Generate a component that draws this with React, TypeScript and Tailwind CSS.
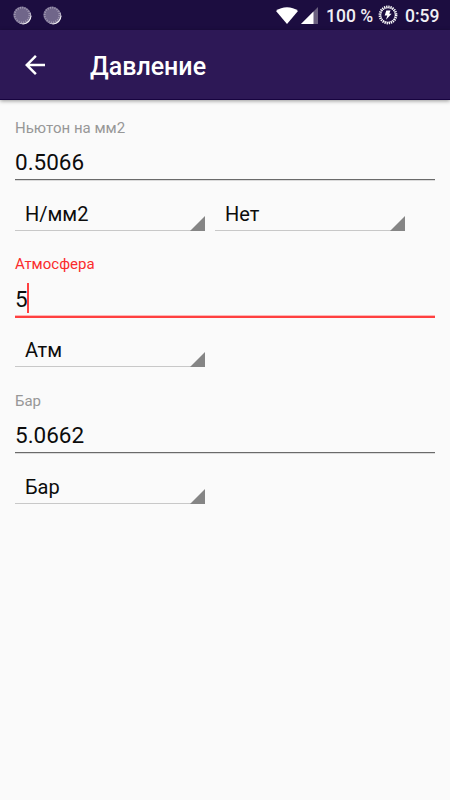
interface SpinnerProps {
    value: string;
}

interface FieldProps {
    label: string;
    value: string;
    units: string[];
    focused?: boolean;
}

const SyncDot = () => (
    <svg className="w-5 h-5" viewBox="0 0 20 20">
        <circle cx="11.2" cy="11.2" r="8.2" fill="#f4f2f6" />
        <circle cx="10" cy="10" r="8.6" fill="#70668a" />
        <circle cx="10" cy="10" r="7.4" fill="none" stroke="#a098b1" strokeWidth="1.8" strokeDasharray="1.1 1.22" />
    </svg>
);

const StatusBar = () => (
    <div className="flex items-center justify-between h-[30px] bg-[#1c0d40] pl-3 pr-[10px]">
        <div className="flex gap-[10px] pb-px">
            <SyncDot />
            <SyncDot />
        </div>
        <div className="flex items-center text-[17.5px] font-medium leading-none text-[#f1eff4]">
            <svg className="w-[22px] h-[17px]" viewBox="0 0 22 17">
                <path d="M0 4C6-.9 16-.9 22 4L11 17z" fill="#fff" />
            </svg>
            <svg className="w-[17px] h-[17px] ml-[3px]" viewBox="0 0 17 17">
                <path d="M17 0v17H0z" fill="#6b617f" />
                <path d="M12.5 4.5V17H0z" fill="#fff" />
            </svg>
            <span className="ml-[8px] mt-[3px] w-[48px] whitespace-nowrap">100 %</span>
            <svg className="w-5 h-5 ml-[4px]" viewBox="0 0 20 20">
                <circle cx="10" cy="10" r="8.2" fill="none" stroke="#fff" strokeWidth="2.4" strokeDasharray="1.3 .85" />
                <circle cx="10" cy="10" r="7.2" fill="none" stroke="#fff" strokeWidth=".7" />
                <path d="M8.3 5.5h4.2L11.3 8.8h2.3L8 14.8l1.3-4.2H6.7z" fill="#fff" />
            </svg>
            <span className="ml-[7px] mt-[3px] w-[35px] whitespace-nowrap">0:59</span>
        </div>
    </div>
);

const AppBar = () => (
    <header className="flex items-center h-[70px] bg-[#2d1856] border-b border-[#17033f] pl-[20px] text-white shadow-[0_1px_4px_rgba(0,0,0,0.4)]">
        <svg className="w-[30px] h-[30px]" viewBox="0 0 24 24" fill="currentColor">
            <path d="M20 11H7.83l5.59-5.59L12 4l-8 8 8 8 1.41-1.41L7.83 13H20v-2z" />
        </svg>
        <h1 className="ml-10 mt-[3px] text-[25px] font-medium leading-none">Давление</h1>
    </header>
);

const Spinner = ({ value }: SpinnerProps) => (
    <div className="flex items-end justify-between w-[190px] h-[36px] border-b border-[#c8c8c8] pl-[10px]">
        <span className="text-[20px] leading-[32px]">{value}</span>
        <svg className="w-[15px] h-[15px] -mb-px" viewBox="0 0 15 15">
            <path d="M15 0v15H0z" fill="#858585" />
        </svg>
    </div>
);

const Field = ({ label, value, units, focused = false }: FieldProps) => (
    <section className="h-[136.3px]">
        <div
            className={
                focused
                    ? "text-[15px] leading-[25.6px] mb-[0.4px] text-[#fb2c2c]"
                    : "text-[15px] leading-[25.6px] mb-[0.4px] text-[#979797]"
            }
        >
            {label}
        </div>
        <div
            className={
                focused
                    ? "flex items-center h-[40px] border-b-2 border-[#ff4040] shadow-[inset_0_-1px_0_#ffb5b5]"
                    : "flex items-center h-[38px] border-b border-[#6a6a6a] shadow-[0_1px_0_#dadada]"
            }
        >
            <span className="text-[22.5px] leading-[30px] mt-[3px]">{value}</span>
            {focused && <span className="w-[2.5px] h-[30px] -ml-px mt-px bg-[#ff4040]" />}
        </div>
        <div className={focused ? "flex gap-[10px] pt-[13px]" : "flex gap-[10px] pt-[15px]"}>
            {units.map((unit) => (
                <Spinner key={unit} value={unit} />
            ))}
        </div>
    </section>
);

const App = () => {
    return (
        <div className="w-[450px] h-[800px] overflow-hidden bg-[#fafafa] font-[Roboto,sans-serif] text-[#0c0c0c]">
            <StatusBar />
            <AppBar />
            <main className="px-[15px] pt-4">
                <Field label="Ньютон на мм2" value="0.5066" units={["Н/мм2", "Нет"]} />
                <Field label="Атмосфера" value="5" units={["Атм"]} focused />
                <Field label="Бар" value="5.0662" units={["Бар"]} />
            </main>
        </div>
    );
};

export default App;
